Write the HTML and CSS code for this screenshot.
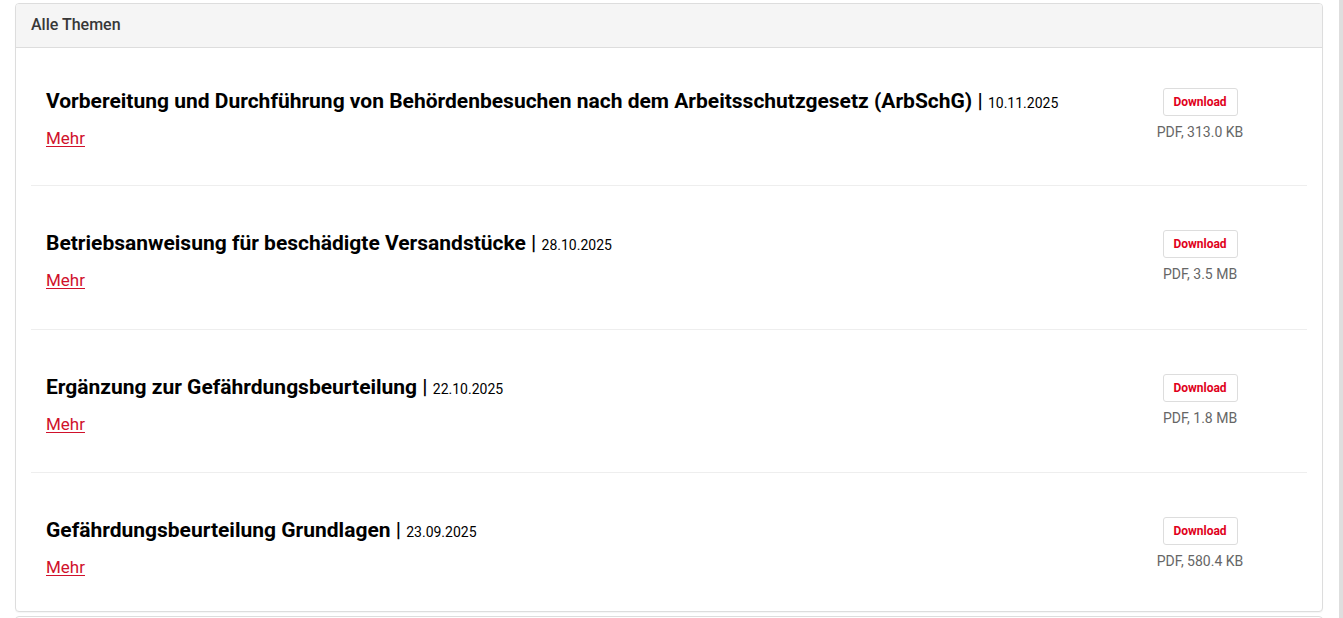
FILE: index.html
```html
<!DOCTYPE html>
<html lang="de">
<head>
<meta charset="utf-8">
<title>Alle Themen</title>
<link rel="stylesheet" href="styles.css">
</head>
<body>
<div class="page">
  <main class="main">
    <section class="card">
      <header class="card-head">Alle Themen</header>
      <div class="card-body">
        <article class="item">
          <div class="item-main">
            <h4 class="item-title">Vorbereitung und Durchführung von Behördenbesuchen nach dem Arbeitsschutzgesetz (ArbSchG) <span class="sep">|</span> <span class="date">10.11.2025</span></h4>
            <a class="more" href="#">Mehr</a>
          </div>
          <div class="item-side">
            <a class="btn" href="#">Download</a>
            <div class="meta">PDF, 313.0 KB</div>
          </div>
        </article>
        <article class="item">
          <div class="item-main">
            <h4 class="item-title">Betriebsanweisung für beschädigte Versandstücke <span class="sep">|</span> <span class="date">28.10.2025</span></h4>
            <a class="more" href="#">Mehr</a>
          </div>
          <div class="item-side">
            <a class="btn" href="#">Download</a>
            <div class="meta">PDF, 3.5 MB</div>
          </div>
        </article>
        <article class="item">
          <div class="item-main">
            <h4 class="item-title">Ergänzung zur Gefährdungsbeurteilung <span class="sep">|</span> <span class="date">22.10.2025</span></h4>
            <a class="more" href="#">Mehr</a>
          </div>
          <div class="item-side">
            <a class="btn" href="#">Download</a>
            <div class="meta">PDF, 1.8 MB</div>
          </div>
        </article>
        <article class="item">
          <div class="item-main">
            <h4 class="item-title">Gefährdungsbeurteilung Grundlagen <span class="sep">|</span> <span class="date">23.09.2025</span></h4>
            <a class="more" href="#">Mehr</a>
          </div>
          <div class="item-side">
            <a class="btn" href="#">Download</a>
            <div class="meta">PDF, 580.4 KB</div>
          </div>
        </article>
      </div>
    </section>
    <section class="card card-next"></section>
  </main>
  <div class="rail"></div>
</div>
</body>
</html>
```
FILE: styles.css
```css
* { box-sizing: border-box; }
html, body {
  margin: 0;
  padding: 0;
  background: #fff;
  font-family: Roboto, "Liberation Sans", Arial, sans-serif;
  color: #000;
  overflow: hidden;
}
.page {
  display: flex;
  height: 618px;
}
.main {
  width: 1323px;
  padding: 3px 0 0 15px;
  flex: none;
}
.rail {
  margin-left: 16px;
  width: 4px;
  background: #dedede;
  flex: none;
}
.card {
  width: 1308px;
  border: 1px solid #ddd;
  border-radius: 4px;
  background: #fff;
  box-shadow: 0 1px 1px rgba(0,0,0,0.04);
}
.card-next {
  margin-top: 4px;
  height: 40px;
}
.card-head {
  height: 44px;
  padding: 0 15px 2px;
  display: flex;
  align-items: center;
  background: #f5f5f5;
  border-bottom: 1px solid #ddd;
  border-radius: 3px 3px 0 0;
  font-size: 16px;
  font-weight: 500;
  color: #383838;
}
.card-body {
  padding: 0 15px;
}
.item {
  display: flex;
  align-items: flex-start;
  padding: 44px 15px 37px;
  border-bottom: 1px solid #eee;
}
.item:first-child { padding-top: 40px; padding-bottom: 35px; }
.item:nth-child(3) { padding-bottom: 36px; }
.item:last-child { border-bottom: 0; padding-bottom: 32px; }
.item-main {
  flex: 1;
  min-width: 0;
  display: flex;
  flex-direction: column;
  align-items: flex-start;
}
.item-title {
  margin: 0;
  height: 26px;
  font-size: 21px;
  line-height: 26px;
  font-weight: 700;
  color: #000;
}
.sep { font-weight: 500; line-height: 1; }
.date {
  font-size: 14px;
  font-weight: 400;
  line-height: 1;
}
.more {
  display: block;
  margin-top: 12px;
  font-size: 17px;
  line-height: 24px;
  color: #d0112b;
  text-decoration: underline;
  text-underline-offset: 2px;
}
.item-side {
  width: 184px;
  flex: none;
  display: flex;
  flex-direction: column;
  align-items: center;
}
.btn {
  display: flex;
  align-items: center;
  justify-content: center;
  width: 75px;
  height: 28px;
  border: 1px solid #ddd;
  border-radius: 3px;
  background: #fff;
  color: #e0001b;
  font-size: 12px;
  font-weight: 700;
  text-decoration: none;
}
.meta {
  margin-top: 7px;
  font-size: 14px;
  line-height: 18px;
  color: #666;
}
```
